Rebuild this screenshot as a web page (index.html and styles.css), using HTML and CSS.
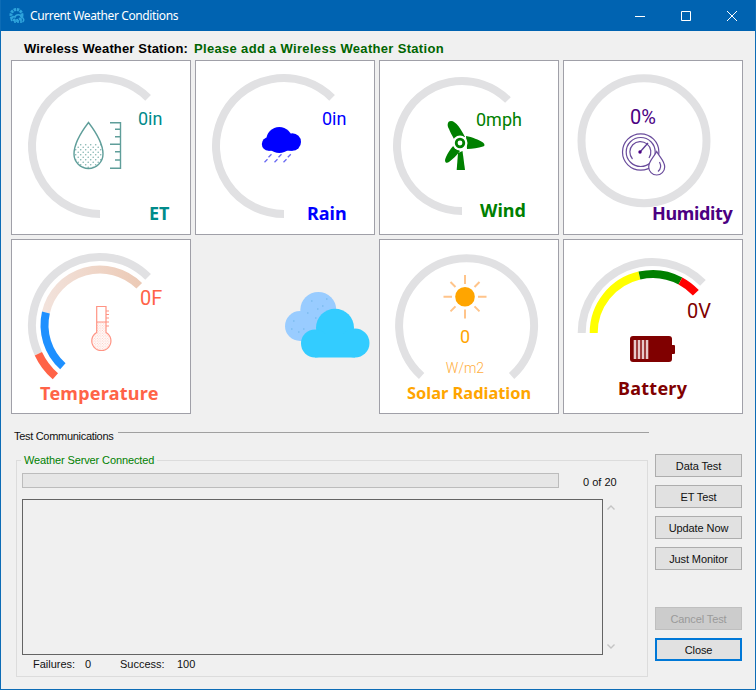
FILE: index.html
```html
<!DOCTYPE html>
<html lang="en">
<head>
    <meta charset="UTF-8">
    <meta name="viewport" content="width=device-width, initial-scale=1.0">
    <title>Current Weather Conditions</title>
    <link rel="stylesheet" href="styles.css">
</head>
<body>
<div class="window">
    <!-- Title bar -->
    <div class="titlebar">
        <svg class="app-icon" viewBox="0 0 16 16">
            <circle class="app-gear" cx="7.5" cy="7" r="5.5"/>
            <path class="app-cloud" d="M3 13 C1 10 4 8 6 9 C7 6 12 6 12.5 9.5 C15 9.5 15.5 13 13.5 14 M6 12 V15 M9 12 V15 M12 12 V15"/>
        </svg>
        <span class="title-text">Current Weather Conditions</span>
        <div class="win-controls">
            <div class="win-btn"><svg viewBox="0 0 10 10"><path d="M0 5.5 H10"/></svg></div>
            <div class="win-btn"><svg viewBox="0 0 10 10"><path d="M.5 .5 H9.5 V9.5 H.5 Z"/></svg></div>
            <div class="win-btn"><svg viewBox="0 0 10 10"><path d="M0 0 L10 10 M10 0 L0 10"/></svg></div>
        </div>
    </div>

    <div class="content">
        <div class="station">
            <span class="station-label">Wireless Weather Station:</span>
            <span class="station-value">Please add a Wireless Weather Station</span>
        </div>

        <!-- Gauges -->
        <div class="gauges">
            <div class="card">
                <svg class="gauge" viewBox="0 0 178 173">
                    <defs>
                        <pattern id="dotsTeal" width="5" height="5" patternUnits="userSpaceOnUse">
                            <circle cx="1.2" cy="1.2" r=".8" fill="#82b4b0"/>
                            <circle cx="3.7" cy="3.7" r=".8" fill="#82b4b0"/>
                        </pattern>
                        <pattern id="dotsPink" width="2.6" height="2.6" patternUnits="userSpaceOnUse">
                            <circle cx=".7" cy=".7" r=".55" fill="#ffb9ad"/>
                            <circle cx="2" cy="2" r=".55" fill="#ffb9ad"/>
                        </pattern>
                        <linearGradient id="paleArc" x1="0" y1="0" x2="1" y2="0">
                            <stop offset="0" stop-color="#f2e2db"/>
                            <stop offset="1" stop-color="#eccab6"/>
                        </linearGradient>
                    </defs>
                    <path class="track" d="M88 153 A68 68 0 1 1 136.08 36.92"/>
                    <path fill="url(#dotsTeal)" d="M63 82 H90 C91.5 86 91 90 91 93 A14.5 14.5 0 0 1 62 93 C62 90 62 86 63 82 Z"/>
                    <path class="et-line" d="M76.5 61.5 C70 70 62 82 62 93 A14.5 14.5 0 0 0 91 93 C91 82 83 70 76.5 61.5 Z"/>
                    <path class="et-line" d="M108.5 61 V108 M98 61.7 H108.5 M103 68.3 H108.5 M103 75.7 H108.5 M98 83.3 H108.5 M103 90.7 H108.5 M103 99 H108.5 M98 107.3 H108.5"/>
                    <text class="value c-et" x="126" y="64">0in</text>
                    <text class="label c-et" x="137" y="159">ET</text>
                </svg>
            </div>

            <div class="card">
                <svg class="gauge" viewBox="0 0 178 173">
                    <path class="track" d="M88 153 A68 68 0 1 1 136.08 36.92"/>
                    <g class="f-rain">
                        <circle cx="83.3" cy="79" r="13"/>
                        <circle cx="72.5" cy="83" r="6.7"/>
                        <circle cx="96.3" cy="81" r="8.7"/>
                        <rect x="72.5" y="80" width="24" height="9.7"/>
                    </g>
                    <path class="rain-drops" d="M75.5 93.2 l-3 3 M85.5 93.2 l-3 3 M94.8 93.2 l-3 3 M71.5 98.2 l-3 3 M81.5 98.2 l-3 3 M90.5 98.2 l-3 3"/>
                    <text class="value c-rain" x="126" y="64">0in</text>
                    <text class="label c-rain" x="111" y="159">Rain</text>
                </svg>
            </div>

            <div class="card">
                <svg class="gauge" viewBox="0 0 178 173">
                    <path class="track" d="M82 150 A65 65 0 1 1 127.96 39.04"/>
                    <g class="f-wind">
                        <path d="M85 76 C81 68 76 60 71 60 C67 60 67 65 69 68 C70 71 72 74 74 78 Z"/>
                        <path d="M86 75 C92 76 99 79 103 81.5 C105 83 105 85 103 85.5 C98 87 93 88 87 88 Z"/>
                        <path d="M74 84 C70 88 66 95 65 99 C65 102 67 102.5 69 101 C73 98 77 94 80 90 Z"/>
                        <path d="M78 92 L76.7 109 H85 L82.5 90 Z"/>
                    </g>
                    <circle class="f-white" cx="80" cy="82" r="7.5"/>
                    <circle class="f-wind" cx="80" cy="82" r="5.2"/>
                    <circle class="f-white" cx="80" cy="82" r="2.4"/>
                    <text class="value c-wind" x="96" y="65">0mph</text>
                    <text class="label c-wind" x="100" y="156">Wind</text>
                </svg>
            </div>

            <div class="card">
                <svg class="gauge" viewBox="0 0 178 173">
                    <circle class="track" cx="80" cy="79.7" r="62.5"/>
                    <g class="hum-line">
                        <circle cx="76.7" cy="91" r="18.2"/>
                        <circle cx="76.7" cy="91" r="14.5"/>
                        <path d="M68.5 98 A10.5 10.5 0 1 1 85 97"/>
                    </g>
                    <path class="hum-needle" d="M76 91 L84 82"/>
                    <circle class="hum-hub" cx="76" cy="91" r="1.7"/>
                    <path class="hum-drop" d="M92.7 90.5 C90 96 84.7 100 84.7 106 A8 8 0 0 0 100.7 106 C100.7 100 95.4 96 92.7 90.5 Z"/>
                    <path class="hum-line" d="M95.5 101 C97 104 97 108 94 110.5"/>
                    <text class="value value-lg c-hum" x="66" y="63">0%</text>
                    <text class="label label-tight c-hum" x="88" y="159">Humidity</text>
                </svg>
            </div>

            <div class="card">
                <svg class="gauge" viewBox="0 0 178 173">
                    <path class="track" d="M26.37 113.74 A68 68 0 0 1 136.08 36.92"/>
                    <path class="arc a-tomato" d="M43.39 136.32 A68 68 0 0 1 26.37 113.74"/>
                    <path class="arc a-pale" d="M33.92 72.52 A55.5 55.5 0 0 1 127.24 45.76"/>
                    <path class="arc a-blue" d="M50.86 126.24 A55.5 55.5 0 0 1 33.92 72.52"/>
                    <path fill="url(#dotsPink)" d="M85 82 H93.7 V92 A9.5 9.5 0 1 1 85 92 Z"/>
                    <path class="temp-line" d="M84.7 92.5 V66.5 H94 V92.5 A9.6 9.6 0 1 1 84.7 92.5 Z M84.7 82 H97 M94 71 H97 M94 74.5 H97 M94 78 H97 M94 86 H97"/>
                    <text class="value value-lg c-temp" x="128" y="65">0F</text>
                    <text class="label label-wide c-temp" x="28" y="160">Temperature</text>
                </svg>
            </div>

            <!-- Current conditions picture -->
            <div class="conditions">
                <svg class="gauge" viewBox="0 0 180 175">
                    <g class="cloud-back">
                        <circle cx="123.3" cy="71" r="18"/>
                        <circle cx="105" cy="87" r="15"/>
                        <rect x="105" y="75" width="30" height="27"/>
                    </g>
                    <path class="cloud-specks" d="M98 82 h1.5 M108 90 h1.5 M116 62 h1.5 M127 67 h1.5 M112 74 h1.5 M120 79 h1.5 M103 93 h1.5 M131 60 h1.5 M96 90 h1.5 M122 70 h1.5"/>
                    <g class="cloud-front">
                        <circle cx="140" cy="88.7" r="19"/>
                        <circle cx="160" cy="104" r="14.5"/>
                        <circle cx="120" cy="104.5" r="14"/>
                        <rect x="120" y="95" width="40" height="23.5"/>
                    </g>
                </svg>
            </div>

            <div class="card">
                <svg class="gauge" viewBox="0 0 178 173">
                    <path class="track" d="M41.6 136 A67.5 67.5 0 1 1 131.6 136"/>
                    <circle class="sun" cx="85" cy="56.7" r="9.8"/>
                    <path class="sun-rays" d="M85 35 V44 M85 69.5 V78.5 M63.5 56.7 H72 M98 56.7 H106.5 M70.5 42 L75.5 47 M99.5 42 L94.5 47 M70.5 71.4 L75.5 66.4 M99.5 71.4 L94.5 66.4"/>
                    <text class="value c-solar mid" x="85" y="103">0</text>
                    <text class="unit mid" x="85" y="133">W/m2</text>
                    <text class="label label-sm c-solar" x="27" y="159">Solar Radiation</text>
                </svg>
            </div>

            <div class="card">
                <svg class="gauge" viewBox="0 0 178 173">
                    <path class="track" d="M17.7 93 A71 71 0 0 1 138.9 42.8"/>
                    <path class="arc a-yellow" d="M29.7 93 A59 59 0 0 1 75.43 35.51"/>
                    <path class="arc a-green" d="M75.43 35.51 A59 59 0 0 1 116.4 40.91"/>
                    <path class="arc a-red" d="M116.4 40.91 A59 59 0 0 1 131.85 52.76"/>
                    <rect class="batt" x="66" y="96" width="42" height="26" rx="3"/>
                    <rect class="batt" x="107" y="105" width="4" height="9" rx="1"/>
                    <path class="batt-bars" d="M71 100 V119 M75 100 V119 M79 100 V119 M83 100 V119"/>
                    <text class="value value-lg c-batt" x="123" y="78">0V</text>
                    <text class="label label-wide c-batt" x="54" y="155">Battery</text>
                </svg>
            </div>
        </div>

        <!-- Test section -->
        <div class="test">
            <div class="comm">
                <div class="comm-head">
                    <span class="comm-title">Test Communications</span>
                    <div class="comm-line"></div>
                </div>
                <fieldset class="server">
                    <legend>Weather Server Connected</legend>
                    <div class="progress-row">
                        <div class="progress"></div>
                        <span class="progress-count">0 of 20</span>
                    </div>
                    <div class="log-row">
                        <div class="log"></div>
                        <div class="scroll">
                            <svg viewBox="0 0 8 5"><path d="M.5 4.5 L4 1 L7.5 4.5"/></svg>
                            <svg viewBox="0 0 8 5"><path d="M.5 .5 L4 4 L7.5 .5"/></svg>
                        </div>
                    </div>
                    <div class="status">
                        <span class="fail-label">Failures:</span>
                        <span class="fail-count">0</span>
                        <span class="ok-label">Success:</span>
                        <span class="ok-count">100</span>
                    </div>
                </fieldset>
            </div>
            <div class="actions">
                <button>Data Test</button>
                <button>ET Test</button>
                <button>Update Now</button>
                <button>Just Monitor</button>
                <button class="btn-cancel" disabled>Cancel Test</button>
                <button class="btn-close">Close</button>
            </div>
        </div>
    </div>
</div>
</body>
</html>
```

FILE: styles.css
```css
/* Window frame */
html, body {
    margin: 0;
    padding: 0;
}

body {
    font-family: 'Liberation Sans', Arial, sans-serif;
    font-size: 11px;
    color: #111111;
    background-color: #f0f0f0;
}

.window {
    box-sizing: border-box;
    width: 756px;
    height: 690px;
    border: 1px solid #0d6cb6;
    border-top: 0;
    background-color: #f0f0f0;
    overflow: hidden;
}

.titlebar {
    display: flex;
    align-items: center;
    height: 31px;
    background-color: #0063b1;
    color: #ffffff;
    padding-left: 8px;
}

.app-icon {
    width: 16px;
    height: 16px;
    margin-right: 5px;
}

.app-gear {
    fill: none;
    stroke: #2fa4dc;
    stroke-width: 3;
    stroke-dasharray: 2.4 .8;
}

.app-cloud {
    fill: none;
    stroke: #2fa4dc;
    stroke-width: 1.6;
}

.title-text {
    font-family: 'Noto Sans', sans-serif;
    font-size: 12px;
    letter-spacing: -.38px;
}

.win-controls {
    display: flex;
    margin-left: auto;
}

.win-btn {
    display: flex;
    align-items: center;
    justify-content: center;
    width: 46px;
    height: 31px;
}

.win-btn svg {
    width: 10px;
    height: 10px;
    fill: none;
    stroke: #ffffff;
    stroke-width: 1;
}

.content {
    padding-left: 10px;
}

.station {
    display: flex;
    align-items: center;
    gap: 6px;
    height: 29px;
    padding: 6px 0 0 13px;
    box-sizing: border-box;
    font-size: 13px;
    font-weight: bold;
}

.station-label {
    color: #000000;
    letter-spacing: .16px;
}

.station-value {
    color: #006400;
    letter-spacing: .32px;
}

/* Gauges */
.gauges {
    display: grid;
    grid-template-columns: repeat(4, 180px);
    grid-auto-rows: 175px;
    gap: 4px;
}

.card {
    box-sizing: border-box;
    border: 1px solid #a0a0a8;
    background-color: #ffffff;
}

.gauge {
    display: block;
    width: 100%;
    height: 100%;
}

.track, .arc {
    fill: none;
    stroke-width: 8;
}

.track { stroke: #e1e1e3; }
.a-tomato { stroke: #ff6347; }
.a-blue { stroke: #1e90ff; }
.a-pale { stroke: url(#paleArc); }
.a-yellow { stroke: #ffff00; }
.a-green { stroke: #008000; }
.a-red { stroke: #ff0000; }

.value {
    font-family: Roboto, sans-serif;
    font-size: 18px;
    font-weight: 400;
}

.value-lg {
    font-size: 20px;
}

.unit {
    font-family: Roboto, sans-serif;
    font-size: 14px;
    font-weight: 300;
    fill: #ffae40;
}

.mid {
    text-anchor: middle;
}

.label {
    font-family: 'Noto Sans', sans-serif;
    font-size: 18px;
    font-weight: 700;
}

.label-sm {
    font-size: 16.4px;
}

.label-wide {
    letter-spacing: .25px;
}

.label-tight {
    letter-spacing: -.35px;
}

.c-et { fill: #008b8b; }
.c-rain { fill: #0000ff; }
.c-wind { fill: #008000; }
.c-hum { fill: #4b0082; }
.c-temp { fill: #ff6347; }
.c-solar { fill: #ffa500; }
.c-batt { fill: #800000; }

/* Gauge icons */
.et-line {
    fill: none;
    stroke: #5f9e9a;
    stroke-width: 1.4;
}

.f-rain { fill: #0000ff; }
.f-wind { fill: #008000; }
.f-white { fill: #ffffff; }

.rain-drops {
    fill: none;
    stroke: #6a6af2;
    stroke-width: 1.3;
}

.hum-line {
    fill: none;
    stroke: #6a4c9c;
    stroke-width: 1.2;
}

.hum-needle {
    stroke: #5a3a94;
    stroke-width: 1.3;
}

.hum-hub { fill: #4b0082; }

.hum-drop {
    fill: #ffffff;
    stroke: #6a4c9c;
    stroke-width: 1.2;
}

.temp-line {
    fill: none;
    stroke: #ff9484;
    stroke-width: 1.2;
}

.sun { fill: #ffa500; }

.sun-rays {
    fill: none;
    stroke: #ffc48a;
    stroke-width: 2;
}

.batt { fill: #800000; }

.batt-bars {
    fill: none;
    stroke: #e8c8c8;
    stroke-width: 2.6;
}

.cloud-back { fill: #99ccff; }

.cloud-specks {
    fill: none;
    stroke: #7cbcf0;
    stroke-width: 1.5;
}

.cloud-front { fill: #33ccff; }

/* Test section */
.test {
    display: flex;
    gap: 6px;
}

.comm {
    width: 635px;
    margin-left: 3px;
}

.comm-head {
    display: flex;
    align-items: center;
    gap: 5px;
    height: 14px;
    margin-top: 15px;
}

.comm-title {
    letter-spacing: -.3px;
}

.comm-line {
    flex: 1;
    height: 1px;
    margin-top: -7px;
    background-color: #a0a0a0;
}

.server {
    box-sizing: border-box;
    width: 632px;
    height: 223px;
    margin: 11px 0 0 2px;
    padding: 0 0 0 5px;
    border: 1px solid #dcdcdc;
    min-width: 0;
}

.server legend {
    margin-left: -1px;
    padding: 0 3px;
    line-height: 13px;
    letter-spacing: -.12px;
    color: #008000;
}

.progress-row {
    display: flex;
    align-items: center;
    height: 15px;
    margin-top: 6px;
}

.progress {
    box-sizing: border-box;
    width: 537px;
    height: 15px;
    background-color: #e6e6e6;
    border: 1px solid #bcbcbc;
}

.progress-count {
    margin: 2px 0 0 24px;
}

.log-row {
    display: flex;
    margin-top: 11px;
}

.log {
    box-sizing: border-box;
    width: 581px;
    height: 156px;
    border: 1px solid #646464;
}

.scroll {
    display: flex;
    flex-direction: column;
    justify-content: space-between;
    width: 8px;
    padding: 6px 0;
    margin-left: 4px;
}

.scroll svg {
    display: block;
    width: 8px;
    height: 5px;
    fill: none;
    stroke: #c4c4c4;
    stroke-width: 1.4;
}

.status {
    display: flex;
    margin: 3px 0 0 11px;
    line-height: 13px;
}

.fail-label { width: 52px; }
.fail-count { width: 35px; }
.ok-label { width: 57px; }

/* Buttons */
.actions {
    display: flex;
    flex-direction: column;
    gap: 8px;
    width: 87px;
    padding-top: 40px;
}

.actions button {
    box-sizing: border-box;
    height: 23px;
    padding: 0;
    font-family: 'Liberation Sans', Arial, sans-serif;
    font-size: 11px;
    letter-spacing: -.1px;
    color: #111111;
    background-color: #e1e1e1;
    border: 1px solid #adadad;
}

.actions .btn-cancel {
    margin-top: 29px;
    background-color: #cccccc;
    border-color: #bfbfbf;
    color: #9a9a9a;
}

.actions .btn-close {
    border: 2px solid #0078d7;
}
```
